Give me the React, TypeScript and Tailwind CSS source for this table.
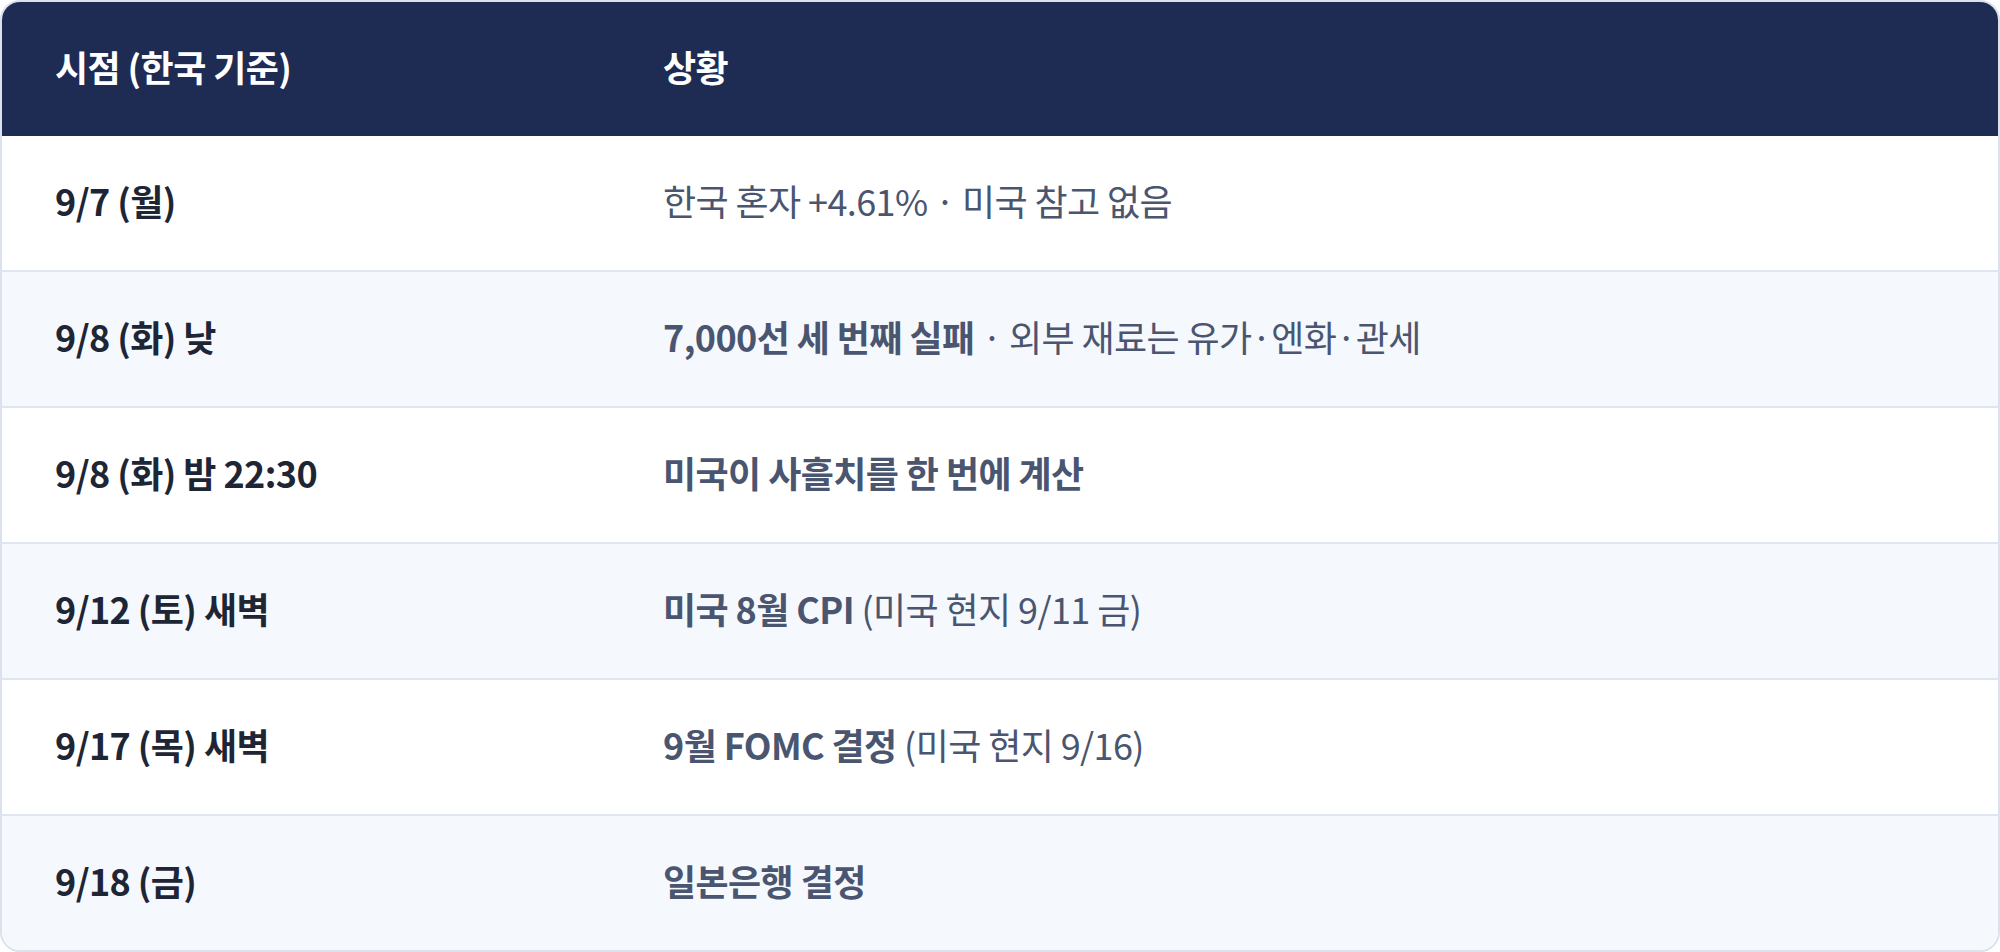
const rows = [
  { time: "9/7 (월)", strong: "", rest: "한국 혼자 +4.61% · 미국 참고 없음" },
  { time: "9/8 (화) 낮", strong: "7,000선 세 번째 실패", rest: " · 외부 재료는 유가·엔화·관세" },
  { time: "9/8 (화) 밤 22:30", strong: "미국이 사흘치를 한 번에 계산", rest: "" },
  { time: "9/12 (토) 새벽", strong: "미국 8월 CPI", rest: " (미국 현지 9/11 금)" },
  { time: "9/17 (목) 새벽", strong: "9월 FOMC 결정", rest: " (미국 현지 9/16)" },
  { time: "9/18 (금)", strong: "일본은행 결정", rest: "" },
];

export default function App() {
  return (
    <div className="w-[2000px] h-[952px] bg-white font-['Noto_Sans_CJK_KR',sans-serif]">
      <div className="h-full rounded-[20px] border-2 border-[#dbe2ee] overflow-hidden">
        <div className="grid grid-cols-[661px_1fr] h-[134px] items-center pb-[6px] bg-[#1e2b53] text-white text-[36px] leading-none font-bold tracking-[-0.6px]">
          <div className="pl-[53px]">시점 (한국 기준)</div>
          <div>상황</div>
        </div>
        {rows.map((row, i) => (
          <div
            key={i}
            className={
              "grid grid-cols-[661px_1fr] items-center pb-[6px] text-[36px] leading-none tracking-[-0.6px] " +
              (i > 0 ? "h-[136px] border-t-2 border-[#dfe6f1] " : "h-[134px] ") +
              (i % 2 === 1 ? "bg-[#f5f8fd]" : "bg-white")
            }
          >
            <div className="pl-[53px] font-bold text-[#1e2535]">{row.time}</div>
            <div className="text-[#4a5570]">
              {row.strong && <span className="font-bold">{row.strong}</span>}
              {row.rest}
            </div>
          </div>
        ))}
      </div>
    </div>
  );
}
